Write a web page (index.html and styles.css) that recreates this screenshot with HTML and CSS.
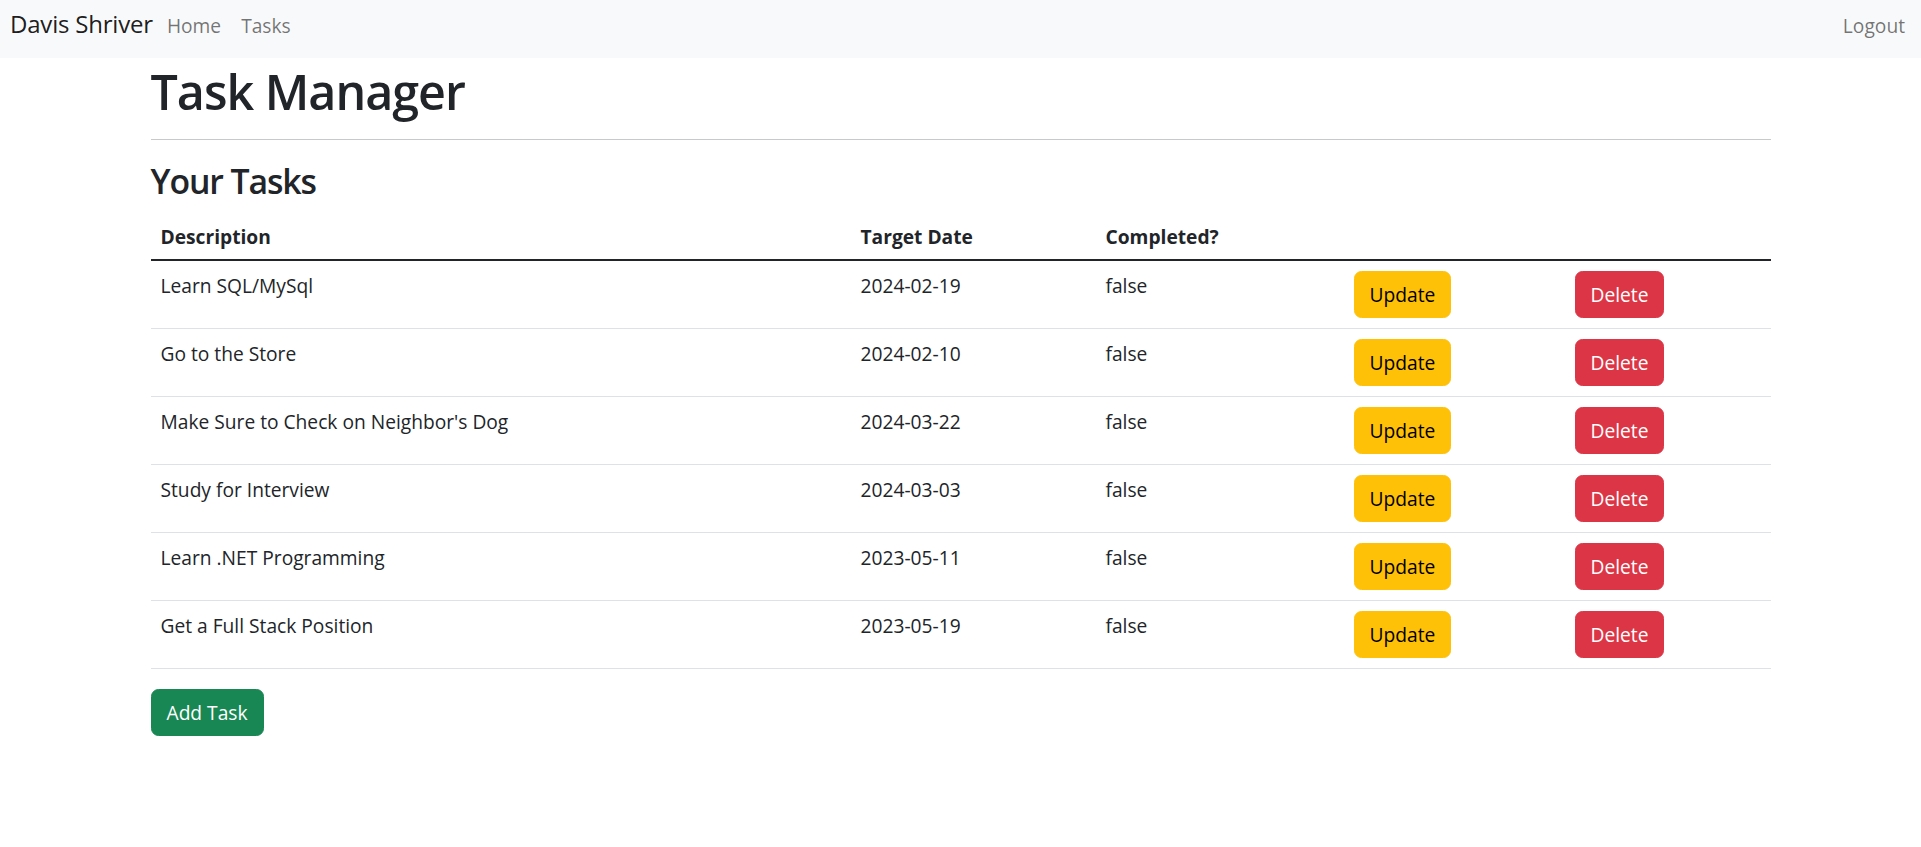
FILE: index.html
```html
<!DOCTYPE html>
<html lang="en">
<head>
<meta charset="utf-8">
<title>Task Manager</title>
<link rel="stylesheet" href="styles.css">
</head>
<body>
<nav class="navbar">
  <a class="brand" href="#">Davis Shriver</a>
  <a class="nav-link" href="#">Home</a>
  <a class="nav-link" href="#">Tasks</a>
  <a class="nav-link logout" href="#">Logout</a>
</nav>
<main class="container">
  <h1 class="title">Task Manager</h1>
  <hr class="divider">
  <h3 class="subtitle">Your Tasks</h3>
  <table class="tasks">
    <colgroup>
      <col class="c-desc"><col class="c-date"><col class="c-done"><col class="c-upd"><col class="c-del">
    </colgroup>
    <thead>
      <tr><th>Description</th><th>Target Date</th><th>Completed?</th><th></th><th></th></tr>
    </thead>
    <tbody>
      <tr><td>Learn SQL/MySql</td><td>2024-02-19</td><td>false</td><td><button class="btn btn-warning">Update</button></td><td><button class="btn btn-danger">Delete</button></td></tr>
      <tr><td>Go to the Store</td><td>2024-02-10</td><td>false</td><td><button class="btn btn-warning">Update</button></td><td><button class="btn btn-danger">Delete</button></td></tr>
      <tr><td>Make Sure to Check on Neighbor's Dog</td><td>2024-03-22</td><td>false</td><td><button class="btn btn-warning">Update</button></td><td><button class="btn btn-danger">Delete</button></td></tr>
      <tr><td>Study for Interview</td><td>2024-03-03</td><td>false</td><td><button class="btn btn-warning">Update</button></td><td><button class="btn btn-danger">Delete</button></td></tr>
      <tr><td>Learn .NET Programming</td><td>2023-05-11</td><td>false</td><td><button class="btn btn-warning">Update</button></td><td><button class="btn btn-danger">Delete</button></td></tr>
      <tr><td>Get a Full Stack Position</td><td>2023-05-19</td><td>false</td><td><button class="btn btn-warning">Update</button></td><td><button class="btn btn-danger">Delete</button></td></tr>
    </tbody>
  </table>
  <button class="btn btn-success">Add Task</button>
</main>
</body>
</html>
```

FILE: styles.css
```css
* { box-sizing: border-box; }
html, body { margin: 0; padding: 0; }
body {
  font-family: "Open Sans", "Noto Sans", sans-serif;
  font-size: 19.2px;
  line-height: 30px;
  color: #212529;
  background: #fff;
}
a { text-decoration: none; }

.navbar {
  height: 58px;
  background: #f8f9fa;
  display: flex;
  align-items: baseline;
  padding: 5px 16px 0 10px;
}
.brand {
  font-size: 24px;
  line-height: 37.5px;
  color: rgba(0, 0, 0, 0.9);
  letter-spacing: -0.2px;
  margin-right: 4px;
}
.nav-link {
  font-size: 19.2px;
  line-height: 30px;
  padding: 0 10px;
  color: rgba(0, 0, 0, 0.55);
}
.logout { margin-left: auto; padding-right: 0; }

.container {
  width: 1620px;
  margin: 0 auto;
}
.title {
  font-size: 48.4px;
  font-weight: 600;
  line-height: 60px;
  letter-spacing: -1px;
  margin: 3px 0 0 0;
}
.divider {
  border: 0;
  border-top: 1px solid #c8c9ca;
  margin: 18px 0 0 0;
}
.subtitle {
  font-size: 33.8px;
  font-weight: 600;
  line-height: 42px;
  letter-spacing: -1.1px;
  margin: 20px 0 7px 0;
}

.tasks {
  width: 100%;
  border-collapse: collapse;
  table-layout: fixed;
  margin-bottom: 20px;
}
.c-desc { width: 700px; }
.c-date { width: 245px; }
.c-done { width: 248px; }
.c-upd { width: 221px; }
.c-del { width: 206px; }

.tasks th {
  text-align: left;
  font-weight: 700;
  padding: 13px 10px 7px 10px;
  border-bottom: 2px solid #212529;
  vertical-align: bottom;
}
.tasks td {
  padding: 10px;
  border-bottom: 1px solid #dee2e6;
  vertical-align: top;
}

.btn {
  font-family: inherit;
  font-size: 19.2px;
  line-height: 30px;
  padding: 7.5px 15px;
  border: 1px solid transparent;
  border-radius: 7.5px;
  cursor: pointer;
  display: inline-block;
}
.btn-warning { background: #ffc107; border-color: #ffc107; color: #000; }
.btn-danger { background: #dc3545; border-color: #dc3545; color: #fff; }
.btn-success { background: #198754; border-color: #198754; color: #fff; }
```
